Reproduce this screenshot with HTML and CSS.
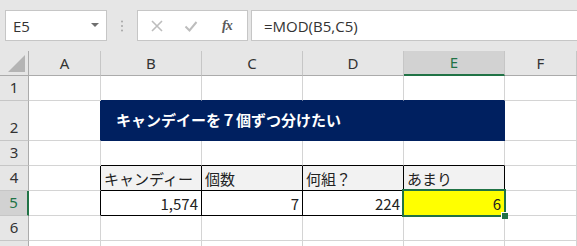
FILE: index.html
```html
<!DOCTYPE html>
<html lang="ja">
<head>
  <meta charset="UTF-8">
  <title>MOD</title>
  <link rel="stylesheet" href="styles.css">
</head>
<body>

  <div class="toolbar">
    <div class="name-box">
      <span>E5</span>
      <span class="drop"></span>
    </div>
    <svg class="grip" width="4" height="12" viewBox="0 0 4 12">
      <circle cx="2" cy="1.5" r="1" fill="#a6a6a6"/>
      <circle cx="2" cy="6" r="1" fill="#a6a6a6"/>
      <circle cx="2" cy="10.5" r="1" fill="#a6a6a6"/>
    </svg>
    <div class="fx-box">
      <svg width="14" height="14" viewBox="0 0 14 14"><path d="M2 2 L12 12 M12 2 L2 12" stroke="#bdbdbd" stroke-width="1.6" fill="none"/></svg>
      <svg width="14" height="14" viewBox="0 0 14 14"><path d="M1.5 7.5 L5.5 11.5 L12.5 3" stroke="#bdbdbd" stroke-width="2" fill="none"/></svg>
      <span class="fx">fx</span>
    </div>
    <div class="formula">=MOD(B5,C5)</div>
  </div>

  <div class="sheet">
    <!-- header row -->
    <div class="c corner">
      <svg width="28" height="24" viewBox="0 0 28 24"><polygon points="8,21 25,21 25,4" fill="#b4b4b4"/></svg>
    </div>
    <div class="c ch">A</div>
    <div class="c ch">B</div>
    <div class="c ch">C</div>
    <div class="c ch">D</div>
    <div class="c ch ch-sel">E</div>
    <div class="c ch">F</div>

    <!-- 1 -->
    <div class="c rh">1</div>
    <div class="c"></div>
    <div class="c navy-b"></div>
    <div class="c navy-b"></div>
    <div class="c navy-b"></div>
    <div class="c navy-b"></div>
    <div class="c"></div>

    <!-- 2 -->
    <div class="c rh">2</div>
    <div class="c navy-r"></div>
    <div class="c title">キャンデイーを７個ずつ分けたい</div>
    <div class="c"></div>

    <!-- 3 -->
    <div class="c rh">3</div>
    <div class="c"></div>
    <div class="c line-b"></div>
    <div class="c line-b"></div>
    <div class="c line-b"></div>
    <div class="c line-b"></div>
    <div class="c"></div>

    <!-- 4 -->
    <div class="c rh">4</div>
    <div class="c line-r"></div>
    <div class="c th">キャンディー</div>
    <div class="c th">個数</div>
    <div class="c th">何組？</div>
    <div class="c th">あまり</div>
    <div class="c"></div>

    <!-- 5 -->
    <div class="c rh rh-sel">5</div>
    <div class="c line-r"></div>
    <div class="c td">1,574</div>
    <div class="c td">7</div>
    <div class="c td">224</div>
    <div class="c td active">6</div>
    <div class="c"></div>

    <!-- 6 -->
    <div class="c rh">6</div>
    <div class="c"></div>
    <div class="c"></div>
    <div class="c"></div>
    <div class="c"></div>
    <div class="c"></div>
    <div class="c"></div>

    <!-- 7 (cut off by the window) -->
    <div class="c rh"></div>
    <div class="c"></div>
    <div class="c"></div>
    <div class="c"></div>
    <div class="c"></div>
    <div class="c"></div>
    <div class="c"></div>
  </div>

</body>
</html>
```

FILE: styles.css
```css
* {
  box-sizing: border-box;
}
body {
  margin: 0;
  font-family: "Noto Sans CJK JP", sans-serif;
  background-color: #fff;
  color: #222;
  overflow: hidden;
}
.toolbar {
  height: 51px;
  background-color: #e6e6e6;
  display: flex;
  align-items: flex-start;
  padding-top: 10px;
}
.name-box {
  margin-left: 5px;
  width: 102px;
  height: 31px;
  background-color: #fff;
  border: 1px solid #c6c6c6;
  display: flex;
  align-items: center;
  justify-content: space-between;
  padding: 0 7px 0 7px;
  font-family: "Open Sans", sans-serif;
  font-size: 15px;
  color: #333;
}
.drop {
  width: 0;
  height: 0;
  border-left: 4px solid transparent;
  border-right: 4px solid transparent;
  border-top: 4px solid #6f6f6f;
  margin-top: -2px;
}
.grip {
  margin: 10px 0 0 13px;
}
.fx-box {
  margin-left: 13px;
  width: 111px;
  height: 31px;
  background-color: #fff;
  border: 1px solid #c6c6c6;
  display: flex;
  align-items: center;
  padding-left: 12px;
  gap: 20px;
}
.fx {
  margin-left: 4px;
  font-family: "Liberation Serif", serif;
  font-style: italic;
  font-weight: bold;
  font-size: 14px;
  color: #5a5a5a;
  letter-spacing: -1px;
}
.formula {
  margin-left: 3px;
  flex: 1;
  height: 31px;
  background-color: #fff;
  border: 1px solid #c6c6c6;
  border-right: none;
  padding-left: 12px;
  display: flex;
  align-items: center;
  font-family: "Open Sans", sans-serif;
  font-size: 15px;
  color: #333;
}
.sheet {
  display: grid;
  grid-template-columns: 29px 72px 101px 101px 101px 101px 1fr;
  grid-template-rows: 25px 25px 40px 25px 25px 25px 25px 25px;
}
.c {
  border-right: 1px solid #d4d4d4;
  border-bottom: 1px solid #d4d4d4;
  display: flex;
  align-items: flex-end;
  padding: 0 3px 1px;
  font-size: 15px;
  line-height: 21px;
  white-space: nowrap;
  overflow: hidden;
}
.corner {
  padding: 0;
  background-color: #e6e6e6;
  border-right: 1px solid #ababab;
  border-bottom: 1px solid #ababab;
}
.ch {
  background-color: #e6e6e6;
  border-right-color: #c6c6c6;
  border-bottom-color: #ababab;
  justify-content: center;
  align-items: center;
  padding: 0;
  font-family: "Noto Sans", sans-serif;
  color: #333;
}
.ch-sel {
  background-color: #d2d2d2;
  border-bottom: 2px solid #217346;
  color: #217346;
}
.rh {
  background-color: #e6e6e6;
  border-right-color: #ababab;
  border-bottom-color: #c6c6c6;
  justify-content: center;
  padding: 0 0 2px;
  font-family: "Noto Sans", sans-serif;
  color: #333;
}
.rh-sel {
  background-color: #d2d2d2;
  border-right: 2px solid #217346;
  color: #217346;
}
.navy-b {
  border-bottom-color: #002060;
}
.navy-r {
  border-right-color: #002060;
}
.title {
  grid-column: span 4;
  background-color: #002060;
  border-color: #002060;
  color: #fff;
  font-weight: bold;
  align-items: center;
  padding: 0 0 3px 15px;
}
.line-b {
  border-bottom-color: #000;
}
.line-r {
  border-right-color: #000;
}
.th {
  background-color: #f2f2f2;
  border-right-color: #000;
  border-bottom-color: #000;
}
.td {
  border-right-color: #000;
  border-bottom-color: #000;
  justify-content: flex-end;
}
.active {
  background-color: #ffff00;
  position: relative;
  overflow: visible;
}
.active::before {
  content: "";
  position: absolute;
  top: -2px;
  left: -2px;
  right: -2px;
  bottom: -2px;
  border: 2px solid #217346;
}
.active::after {
  content: "";
  position: absolute;
  right: -4px;
  bottom: -4px;
  width: 6px;
  height: 6px;
  background-color: #217346;
  border: 1px solid #fff;
  border-right: none;
  border-bottom: none;
}
```
